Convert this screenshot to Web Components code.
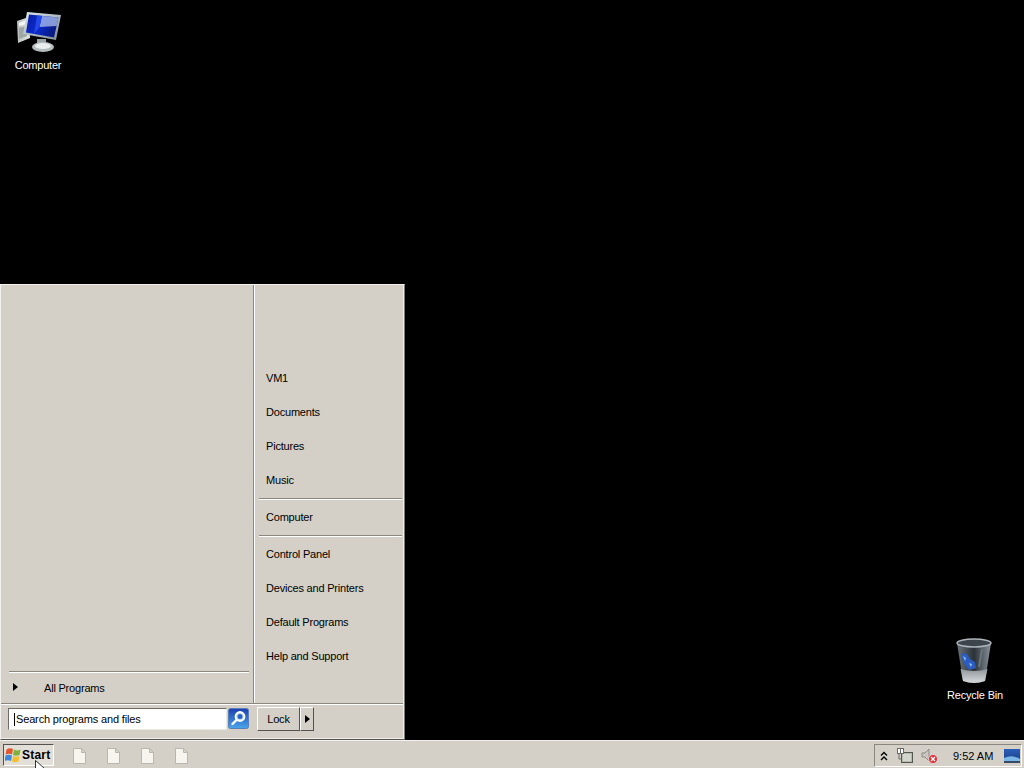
<!DOCTYPE html>
<html>
<head>
<meta charset="utf-8">
<title>Desktop</title>
<style>
  html, body { margin: 0; height: 100%; background: #000; overflow: hidden; }
  body { font-family: "Liberation Sans", Arial, sans-serif; font-size: 11px; letter-spacing: -.2px; }
</style>
</head>
<body>
<win-screen>
  <desk-icon style="left:0;top:8px" label="Computer">
    <svg width="48" height="48" viewBox="0 0 48 48">
      <defs>
        <linearGradient id="scr" x1="0" y1="0" x2="1" y2=".4"><stop offset="0" stop-color="#0a1a9c"/><stop offset=".5" stop-color="#0b2bd0"/><stop offset="1" stop-color="#0a1a80"/></linearGradient>
        <linearGradient id="bez" x1="0" y1="0" x2="1" y2="1"><stop offset="0" stop-color="#dfe8ee"/><stop offset="1" stop-color="#7f8b93"/></linearGradient>
        <linearGradient id="tow" x1="0" y1="0" x2="1" y2="0"><stop offset="0" stop-color="#b7bdbb"/><stop offset="1" stop-color="#e6e9e8"/></linearGradient>
      </defs>
      <path d="M3 13 15 9 16 30 4 35z" fill="url(#tow)"/>
      <path d="M5 15l8-3v4l-8 2z" fill="#f6f7f6"/>
      <path d="M5 20l8-2v10l-8 3z" fill="#9fa7a5"/>
      <path d="M23 31h9v6H23z" fill="#9aa3a6"/>
      <ellipse cx="29" cy="39" rx="11" ry="5" fill="#b5bcbc"/>
      <ellipse cx="29" cy="38" rx="8" ry="3" fill="#e9eded"/>
      <path d="M13 4 47 7 42 32 9 26z" fill="url(#bez)"/>
      <path d="M15 6.500 44.500 9.500 40 29.500 12 24.500z" fill="url(#scr)"/>
      <path d="M28 8 44.500 9.500 42.500 18 25.500 19z" fill="#b9cdf0" opacity=".7"/>
      <path d="M28 8 25.500 19 20 26 23 7.500z" fill="#2448e8"/>
    </svg>
  </desk-icon>
  <desk-icon style="left:937px;top:638px" label="Recycle Bin">
    <svg width="48" height="48" viewBox="0 0 48 48">
      <defs>
        <linearGradient id="bin" x1="0" y1="0" x2="1" y2="0"><stop offset="0" stop-color="#6c747b"/><stop offset=".5" stop-color="#2a3137"/><stop offset="1" stop-color="#8a939b"/></linearGradient>
        <linearGradient id="low" x1="0" y1="0" x2="0" y2="1"><stop offset="0" stop-color="#8f969b"/><stop offset="1" stop-color="#d7dadd"/></linearGradient>
      </defs>
      <path d="M6 5 12 43Q23 47 34 43L40 5z" fill="url(#bin)"/>
      <path d="M9.500 31Q23 35 36.500 31L34 43Q23 47 12 43z" fill="url(#low)"/>
      <ellipse cx="23" cy="5" rx="17" ry="4" fill="#3c454c" stroke="#aeb5ba" stroke-width="1.500"/>
      <path d="M10 15l6 1 3 5 5 3 1 6-7 2-4-5-3-6z" fill="#2c5cc0"/>
      <path d="M12 18l3 2-1 3zM18 25l3 1-1 3z" fill="#8fc4ee"/>
      <path d="M31 11 28 29" stroke="#69747e" stroke-width="2"/>
    </svg>
  </desk-icon>

  <start-menu>
    <menu-item>VM1</menu-item>
    <menu-item>Documents</menu-item>
    <menu-item>Pictures</menu-item>
    <menu-item>Music</menu-item>
    <menu-sep></menu-sep>
    <menu-item>Computer</menu-item>
    <menu-sep></menu-sep>
    <menu-item>Control Panel</menu-item>
    <menu-item>Devices and Printers</menu-item>
    <menu-item>Default Programs</menu-item>
    <menu-item>Help and Support</menu-item>
  </start-menu>

  <task-bar></task-bar>
</win-screen>

<script>
class WinScreen extends HTMLElement {
  constructor() {
    super();
    this.attachShadow({ mode: 'open' });
    this.shadowRoot.innerHTML = `
      <style>
        :host { display: block; position: relative; width: 1024px; height: 768px; background: #000; overflow: hidden; }
      </style>
      <slot></slot>
    `;
  }
}

class DeskIcon extends HTMLElement {
  constructor() {
    super();
    this.attachShadow({ mode: 'open' });
    this.shadowRoot.innerHTML = `
      <style>
        :host { display: flex; flex-direction: column; align-items: center; position: absolute; width: 76px; color: #fff; }
        .pic { height: 48px; filter: blur(.3px); }
        .label { margin-top: 2px; line-height: 15px; white-space: nowrap; }
      </style>
      <div class="pic"><slot></slot></div>
      <div class="label">${this.getAttribute('label')}</div>
    `;
  }
}

class MenuItem extends HTMLElement {
  constructor() {
    super();
    this.attachShadow({ mode: 'open' });
    this.shadowRoot.innerHTML = `
      <style>
        :host { display: flex; align-items: center; height: 34px; padding-left: 12px; color: #000; white-space: nowrap; }
      </style>
      <slot></slot>
    `;
  }
}

class MenuSep extends HTMLElement {
  constructor() {
    super();
    this.attachShadow({ mode: 'open' });
    this.shadowRoot.innerHTML = `
      <style>
        :host { display: block; height: 1px; margin: 1px 2px 0 5px; background: #8a8780; border-bottom: 1px solid #fff; }
      </style>
    `;
  }
}

class StartMenu extends HTMLElement {
  constructor() {
    super();
    this.attachShadow({ mode: 'open' });
    this.shadowRoot.innerHTML = `
      <style>
        :host {
          display: flex; flex-direction: column; box-sizing: border-box;
          position: absolute; left: 0; top: 284px; width: 405px; height: 456px;
          background: #d4d0c8; color: #000;
          border-top: 1px solid #f4f2ee; border-left: 1px solid #f4f2ee;
          border-right: 1px solid #7c7a75; border-bottom: 1px solid #55534f;
          box-shadow: inset -1px -1px 0 #f0eee9;
        }
        .main { display: flex; height: 418px; }
        .left { width: 252px; display: flex; flex-direction: column; justify-content: flex-end; }
        .left-sep { height: 1px; margin: 0 4px 0 8px; background: #8a8780; border-bottom: 1px solid #fff; }
        .all { display: flex; align-items: center; height: 30px; padding-left: 12px; gap: 26px; }
        .arrow { width: 0; height: 0; border-left: 5px solid #000; border-top: 4px solid transparent; border-bottom: 4px solid transparent; }
        .all .arrow { margin-bottom: 2px; }
        .right { flex: 1; box-sizing: border-box; padding-top: 76px; border-left: 1px solid #8a8780; box-shadow: inset 1px 0 0 #fff; }
        .bottom {
          flex: 1; display: flex; align-items: flex-start; padding: 4px 0 0 7px;
          border-top: 1px solid #8a8780; box-shadow: inset 0 1px 0 #fff; margin-right: 1px;
        }
        .search {
          box-sizing: border-box; width: 219px; height: 22px; background: #fff;
          display: flex; align-items: center; padding-left: 5px; letter-spacing: -.15px;
          border-top: 1px solid #6d6b66; border-left: 1px solid #6d6b66;
          border-right: 1px solid #ece9e3; border-bottom: 1px solid #ece9e3;
          white-space: nowrap;
        }
        .caret { width: 1px; height: 13px; background: #000; margin-right: 1px; }
        .go { margin-left: 1px; display: block; }
        .lock { display: flex; margin-left: 8px; margin-top: -1px; height: 24px; }
        .btn {
          box-sizing: border-box; height: 24px; display: flex; align-items: center; justify-content: center;
          border-top: 1px solid #fff; border-left: 1px solid #fff;
          border-right: 1px solid #55534f; border-bottom: 1px solid #55534f;
          background: #d4d0c8;
        }
        .lock-main { width: 43px; }
        .lock-more { width: 14px; }
      </style>
      <div class="main">
        <div class="left">
          <div class="left-sep"></div>
          <div class="all"><i class="arrow"></i><span>All Programs</span></div>
        </div>
        <div class="right"><slot></slot></div>
      </div>
      <div class="bottom">
        <div class="search"><i class="caret"></i><span>Search programs and files</span></div>
        <svg class="go" width="21" height="21" viewBox="0 0 21 21">
          <defs><linearGradient id="g" x1="0" y1="0" x2="0" y2="1"><stop offset="0" stop-color="#1c3fb0"/><stop offset="1" stop-color="#4aa6ea"/></linearGradient></defs>
          <rect x=".5" y=".5" width="20" height="20" rx="2" fill="url(#g)" stroke="#5a7fb8"/>
          <circle cx="12" cy="8.500" r="4.500" fill="#bcd8f4" stroke="#fff" stroke-width="1.800"/>
          <circle cx="12" cy="8.500" r="2.500" fill="#2a62c8"/>
          <path d="M8.500 12 4.500 16" stroke="#fff" stroke-width="2.400" stroke-linecap="round"/>
        </svg>
        <div class="lock">
          <div class="btn lock-main">Lock</div>
          <div class="btn lock-more"><i class="arrow"></i></div>
        </div>
      </div>
    `;
  }
}

class TaskBar extends HTMLElement {
  constructor() {
    super();
    this.attachShadow({ mode: 'open' });
    const doc = `<svg class="doc" width="13" height="16" viewBox="0 0 13 16">
      <path d="M.5.5h8l4 4v11H.5z" fill="#f7f5ee" stroke="#b9b6ad"/>
      <path d="M8.500.5v4h4z" fill="#d9d6cc" stroke="#b9b6ad"/></svg>`;
    this.shadowRoot.innerHTML = `
      <style>
        :host {
          display: flex; align-items: flex-start; box-sizing: border-box;
          position: absolute; left: 0; top: 740px; width: 1024px; height: 28px;
          background: #d4d0c8; border-top: 1px solid #f4f2ee; color: #000;
        }
        .start {
          box-sizing: border-box; display: flex; align-items: center; gap: 1px;
          width: 51px; height: 22px; margin: 3px 0 0 3px; padding-left: 1px;
          border-top: 1px solid #55534f; border-left: 1px solid #55534f;
          border-right: 1px solid #fff; border-bottom: 1px solid #fff;
          background: #e2dfd8; font-weight: bold; font-size: 12px; letter-spacing: .2px;
        }
        .docs { display: flex; gap: 21px; margin-left: 19px; margin-top: 7px; }
        .doc { display: block; }
        .tray {
          box-sizing: border-box; display: flex; align-items: center; margin-left: auto; margin-right: 2px;
          width: 148px; height: 23px; margin-top: 3px;
          border-top: 1px solid #8a8780; border-left: 1px solid #8a8780;
          border-right: 1px solid #fff; border-bottom: 1px solid #fff;
        }
        .chev { margin-left: 5px; display: block; }
        .net { margin-left: 9px; display: block; }
        .vol { margin-left: 8px; display: block; }
        .clock { margin-left: 15px; white-space: nowrap; letter-spacing: 0; }
        .show { margin-left: 11px; display: block; }
        .cursor { position: absolute; left: 35px; top: 19px; }
      </style>
      <div class="start">
        <svg width="16" height="16" viewBox="0 0 16 16">
          <path d="M1.500 2.500Q4.500 .5 8 2L7 7.500Q4 6 .5 7.500z" fill="#e4572c"/>
          <path d="M9 2.500Q12 4.500 15.500 2.500L14.500 8Q11 9.500 8 8z" fill="#7fb23c"/>
          <path d="M.5 8.500Q3.500 7 7 8.500L6 14Q3 12.500 -.5 14z" fill="#3f86d8"/>
          <path d="M8 9Q11 10.500 14.500 9L13.500 14.500Q10 16 7 14.500z" fill="#f2bf2f"/>
        </svg>
        <span>Start</span>
      </div>
      <div class="docs">${doc}${doc}${doc}${doc}</div>
      <div class="tray">
        <svg class="chev" width="8" height="10" viewBox="0 0 8 10" fill="none" stroke="#000" stroke-width="1.400">
          <path d="M1 4.500 4 1.500 7 4.500M1 9 4 6 7 9"/>
        </svg>
        <svg class="net" width="16" height="16" viewBox="0 0 16 16">
          <rect x="4.500" y="4.500" width="11" height="10" fill="#b5b8ae" stroke="#55584f"/>
          <rect x="6" y="6" width="8" height="7" fill="#d3d6cc"/>
          <rect x=".5" y=".5" width="3" height="5" fill="#fff" stroke="#6a6a64"/>
          <rect x="3.500" y=".5" width="3" height="5" fill="#fff" stroke="#6a6a64"/>
          <path d="M2 5.500V11H5" stroke="#6a6a64" fill="none"/>
        </svg>
        <svg class="vol" width="17" height="16" viewBox="0 0 17 16">
          <path d="M1 5h3l4-4v12L4 9H1z" fill="#c9c6bf" stroke="#8b8a85"/>
          <circle cx="12" cy="11" r="4.500" fill="#d8313a" stroke="#fff" stroke-width=".6"/>
          <path d="M10 9l4 4M14 9l-4 4" stroke="#fff" stroke-width="1.300"/>
        </svg>
        <span class="clock">9:52 AM</span>
        <svg class="show" width="16" height="14" viewBox="0 0 16 14">
          <defs><linearGradient id="sd" x1="0" y1="0" x2="0" y2="1"><stop offset="0" stop-color="#2a5fb8"/><stop offset="1" stop-color="#1a3f8a"/></linearGradient></defs>
          <rect width="16" height="12" fill="url(#sd)"/>
          <path d="M0 9Q8 5 16 10V12H0z" fill="#7ab6e6"/>
          <rect y="12" width="16" height="2" fill="#3a4a66"/>
        </svg>
      </div>
      <svg class="cursor" width="11" height="16" viewBox="0 0 11 16">
        <path d="M.5.500V12L3.500 9.500 5.500 14 7.500 13 5.500 8.500H9.500z" fill="#fff" stroke="#000" stroke-width=".8"/>
      </svg>
    `;
  }
}

customElements.define('win-screen', WinScreen);
customElements.define('desk-icon', DeskIcon);
customElements.define('menu-item', MenuItem);
customElements.define('menu-sep', MenuSep);
customElements.define('start-menu', StartMenu);
customElements.define('task-bar', TaskBar);
</script>
</body>
</html>
